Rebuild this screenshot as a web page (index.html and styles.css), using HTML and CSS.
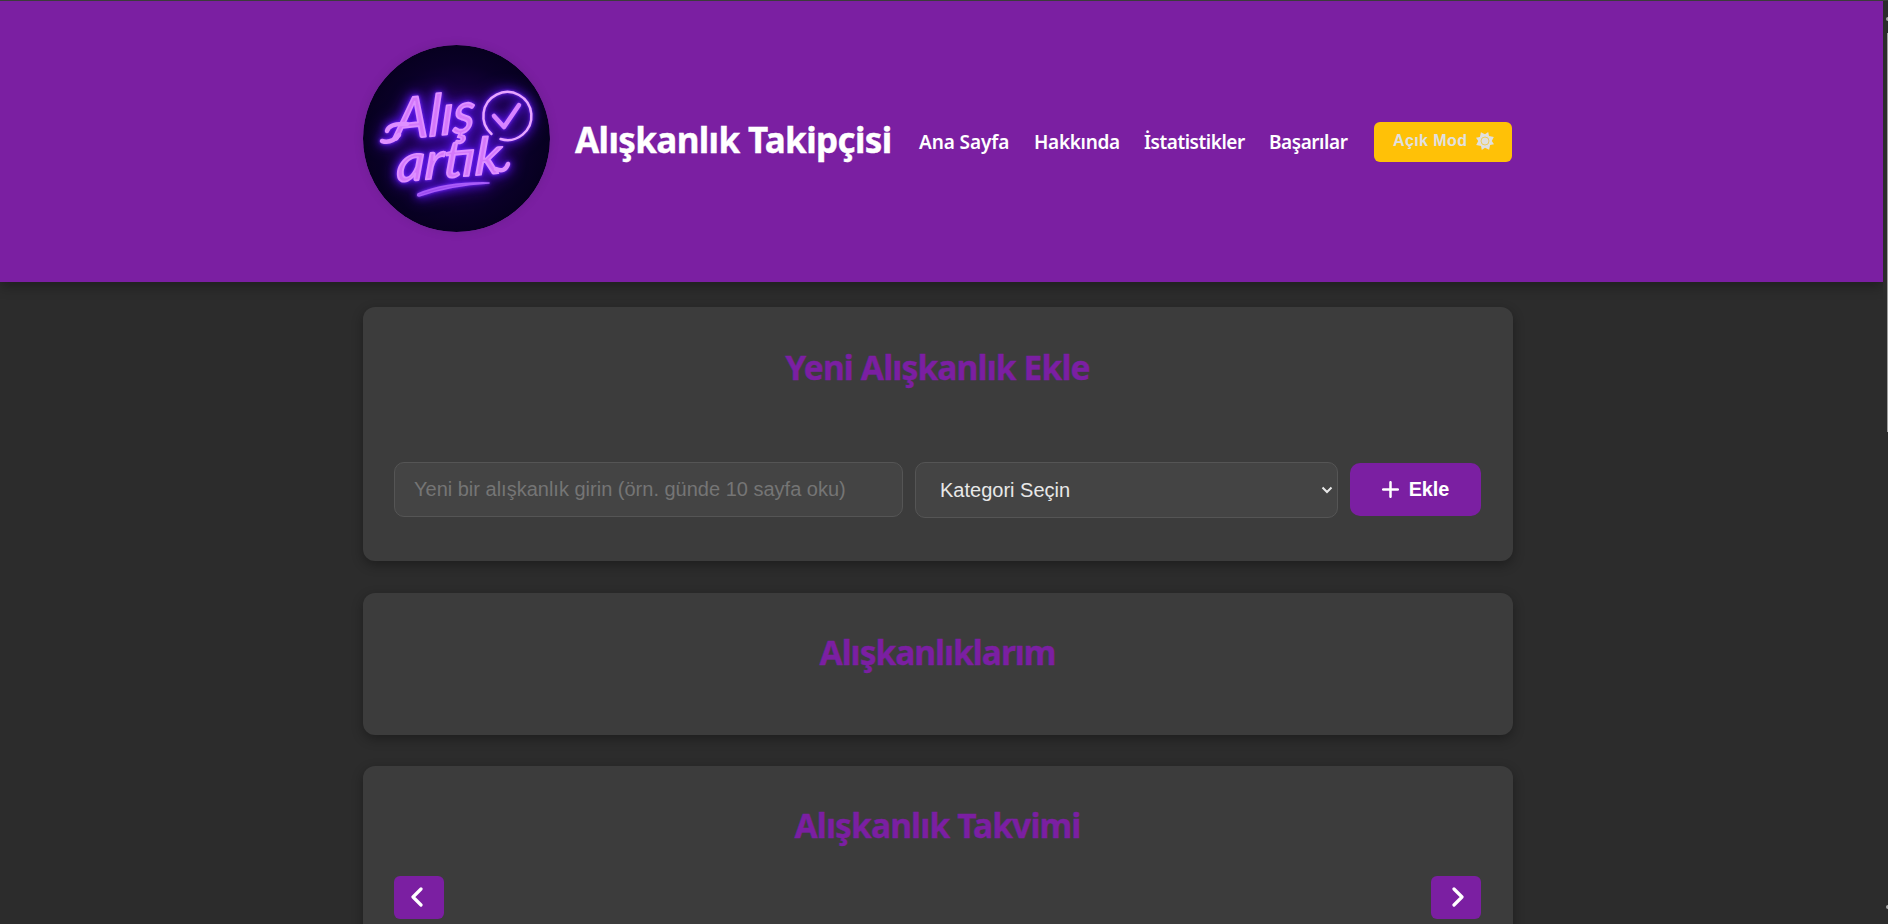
FILE: index.html
```html
<!DOCTYPE html>
<html lang="tr">
<head>
<meta charset="utf-8">
<title>Alışkanlık Takipçisi</title>
<link rel="stylesheet" href="styles.css">
</head>
<body>
<div class="viewport">
  <header class="header">
    <div class="header-inner">
      <svg class="logo" viewBox="0 0 187 187">
        <defs>
          <radialGradient id="night" cx="50%" cy="50%" r="50%">
            <stop offset="0" stop-color="#250065"/>
            <stop offset=".5" stop-color="#17003f"/>
            <stop offset=".8" stop-color="#0a0027"/>
            <stop offset="1" stop-color="#070020"/>
          </radialGradient>
        </defs>
        <circle cx="93.500" cy="93.500" r="93.500" fill="url(#night)"/>
        <g class="neon">
          <text class="script" transform="translate(31 95) rotate(-6) skewX(-8)" textLength="81" lengthAdjust="spacingAndGlyphs">Alış</text>
          <path class="tail" d="M44 79Q26 78 24 86M36 90Q28 99 19 96"/>
          <text class="script script-low" transform="translate(33 137) rotate(-5) skewX(-8)" textLength="105" lengthAdjust="spacingAndGlyphs">artık</text>
          <path class="tail" d="M133 124Q142 128 145 119"/>
          <path class="ring" d="M127 88A24 24 0 1 1 136 93"/>
          <path class="tick" d="M131 70L141 81L156 59"/>
          <path class="swash" d="M55 149Q84 137 126 138Q88 140 56 151Q54 151 55 149Z"/>
        </g>
      </svg>
      <h1 class="title">Alışkanlık Takipçisi</h1>
      <nav class="nav">
        <a class="n1">Ana Sayfa</a><a class="n2">Hakkında</a><a class="n3">İstatistikler</a><a class="n4">Başarılar</a>
      </nav>
      <button class="mode"><span>Açık Mod</span>
        <svg width="18" height="18" viewBox="0 0 18 18"><path fill="#e0e0e0" d="M9 2.200L12.200 0L13 3.900L17.800 4.900L15.800 9L18 12.200L14.100 13L13.100 17.800L9 15.800L5.800 18L5 14.100L.2 13.100L2.200 9L0 5.800L3.900 5L4.900.2Z"/><circle cx="9" cy="9" r="4" fill="none" stroke="#f0cd5c" stroke-width="1"/></svg>
      </button>
    </div>
  </header>
  <main class="main">
    <section class="card card-add">
      <h2 class="h-add">Yeni Alışkanlık Ekle</h2>
      <div class="form">
        <input class="field" placeholder="Yeni bir alışkanlık girin (örn. günde 10 sayfa oku)">
        <div class="select"><span>Kategori Seçin</span>
          <svg width="12" height="8" viewBox="0 0 12 8"><path d="M1.500 1.500L6 6L10.500 1.500" fill="none" stroke="#e8e8e8" stroke-width="2"/></svg>
        </div>
        <button class="add"><svg width="17" height="17" viewBox="0 0 17 17"><path d="M8.500 1.200V15.800M1.200 8.500H15.800" stroke="#fff" stroke-width="2.500" stroke-linecap="round"/></svg><span>Ekle</span></button>
      </div>
    </section>
    <section class="card card-list"><h2 class="h-list">Alışkanlıklarım</h2></section>
    <section class="card card-cal">
      <h2 class="h-cal">Alışkanlık Takvimi</h2>
      <div class="pager">
        <button class="page prev"><svg width="12" height="20" viewBox="0 0 12 20"><path d="M10 2L2 10L10 18"/></svg></button>
        <button class="page next"><svg width="12" height="20" viewBox="0 0 12 20"><path d="M2 2L10 10L2 18"/></svg></button>
      </div>
    </section>
  </main>
  <div class="scroll"><i class="arrow"></i><i class="thumb"></i><i class="arrow arrow-down"></i></div>
</div>
</body>
</html>
```
FILE: styles.css
```css
* { box-sizing: border-box; }
body { margin: 0; background: #2c2c2c; font-family: "Noto Sans", "Open Sans", sans-serif; }
.viewport { position: relative; height: 924px; overflow: hidden; border-top: 1px solid #3b3b3b; }
.header { width: 1883px; height: 281px; background: #7b1fa2; box-shadow: 0 4px 12px rgba(0,0,0,.32); }
.header-inner { width: 1149px; height: 281px; margin-left: 363px; display: flex; align-items: center; padding-bottom: 4px; }
.logo { width: 187px; height: 187px; margin-top: -3px; border-radius: 50%; box-shadow: 0 0 8px rgba(60,30,80,.22); flex: none; }
.neon { fill: none; stroke: #d884ff; stroke-linecap: round; stroke-linejoin: round; filter: drop-shadow(0 0 1.500px #7a2cff) drop-shadow(0 0 4px #5a12e8) drop-shadow(0 0 7px #3c08a8); }
.script { font: italic 400 57px Lato, sans-serif; fill: #d478fa; stroke: #df90ff; stroke-width: 1.800; }
.script-low { font-size: 51px; }
.tail { stroke: #df90ff; stroke-width: 4.500; }
.ring { stroke: #e8a6ff; stroke-width: 2.500; transform: translate(1.500px, 1px); }
.tick { stroke-width: 4.500; transform: translate(0, 1px); }
.swash { fill: #9a48f0; stroke: #a95cf8; stroke-width: 1.600; }
.title { margin: 0 0 0 25px; width: 344px; font-size: 35px; line-height: 48px; letter-spacing: -.62px; color: #fff; -webkit-text-stroke: .4px #fff; white-space: nowrap; flex: none; }
.nav { display: flex; gap: 26px; margin-top: 4px; color: #fff; font-size: 19px; font-weight: 600; line-height: 26px; white-space: nowrap; }
.nav a { flex: none; }
.n1 { width: 89px; letter-spacing: -.1px; } .n2 { width: 84px; letter-spacing: -.3px; } .n3 { width: 99px; letter-spacing: -.45px; } .n4 { width: 78px; letter-spacing: -.45px; }
.mode { margin: 4px 0 0 auto; width: 138px; height: 40px; border: 0; border-radius: 6px; background: #ffc107; color: #e0e0e0; font: 700 16px "Liberation Sans", Arial, sans-serif; letter-spacing: .4px; display: flex; align-items: center; padding: 0 18px 1px 19px; justify-content: space-between; white-space: nowrap; flex: none; }
.main { width: 1150px; margin: 25px 0 0 363px; display: flex; flex-direction: column; }
.card { background: #3c3c3c; border-radius: 12px; box-shadow: 0 4px 12px rgba(0,0,0,.32); padding: 0 32px 0 31px; }
.card h2 { margin: 0; text-align: center; color: #7b1fa2; -webkit-text-stroke: .4px #7b1fa2; font-size: 33.500px; line-height: 46px; letter-spacing: -.85px; white-space: nowrap; }
.card-add { height: 254px; padding-top: 37px; }
.card-list { height: 142px; margin-top: 32px; padding-top: 36px; }
.card-cal { height: 300px; margin-top: 31px; padding-top: 36px; }
.card .h-list { letter-spacing: -1px; }
.form { display: flex; gap: 12px; align-items: flex-start; margin-top: 72px; }
.field { width: 509px; height: 55px; border: 1px solid #555; border-radius: 10px; background: #444; padding: 0 19px; font: 20px "Liberation Sans", Arial, sans-serif; color: #e0e0e0; }
.field::placeholder { color: #757575; opacity: 1; }
.select { width: 423px; height: 56px; border: 1px solid #555; border-radius: 10px; background: #444; color: #e8e8e8; display: flex; align-items: center; justify-content: space-between; padding: 0 4px 0 24px; font: 20px "Liberation Sans", Arial, sans-serif; }
.add { width: 131px; height: 53px; margin-top: 1px; border: 0; border-radius: 10px; background: #7b1fa2; color: #fff; font: 700 19.800px "Liberation Sans", Arial, sans-serif; display: flex; align-items: center; justify-content: center; gap: 10px; padding: 0 0 1px; }
.pager { display: flex; justify-content: space-between; margin-top: 28px; }
.page { width: 50px; height: 43px; border: 0; border-radius: 6px; background: #7b1fa2; padding: 0; display: flex; align-items: center; justify-content: center; }
.prev { padding: 0 4px 2px 0; }
.next { padding: 0 0 2px 3px; }
.page path { fill: none; stroke: #fff; stroke-width: 3.200; stroke-linecap: round; stroke-linejoin: round; }
.scroll { position: absolute; right: 0; top: 0; width: 5px; height: 923px; background: #2c2c2c; }
.thumb { position: absolute; right: 0; top: 32px; width: 1px; height: 399px; background: #9f9f9f; }
.arrow { position: absolute; right: 0; top: 16px; width: 2px; height: 4px; background: #aaa; border-radius: 2px 0 0 2px; }
.arrow-down { top: 904px; }
```
